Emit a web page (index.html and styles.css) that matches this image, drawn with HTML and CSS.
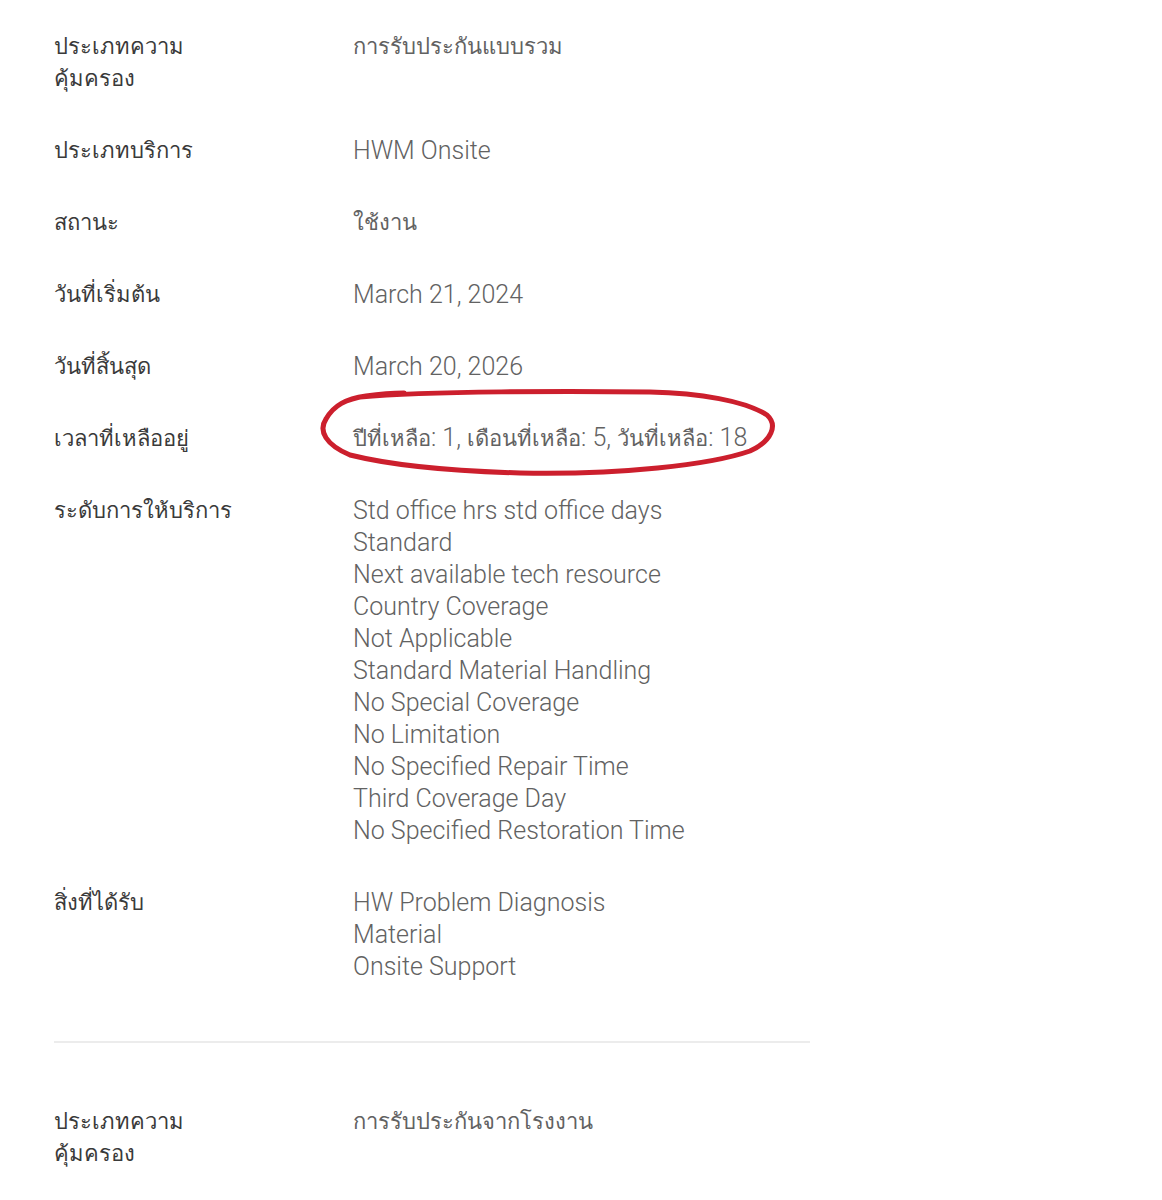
FILE: index.html
```html
<!DOCTYPE html>
<html lang="th">
<head>
    <meta charset="UTF-8">
    <meta name="viewport" content="width=device-width, initial-scale=1.0">
    <title>ข้อมูลการรับประกัน</title>
    <link rel="stylesheet" href="styles.css">
</head>
<body>

<div class="warranty">
    <div class="warranty-block">
        <dl class="details">
            <dt>ประเภทความคุ้มครอง</dt>
            <dd>การรับประกันแบบรวม</dd>

            <dt>ประเภทบริการ</dt>
            <dd class="en">HWM Onsite</dd>

            <dt>สถานะ</dt>
            <dd>ใช้งาน</dd>

            <dt>วันที่เริ่มต้น</dt>
            <dd class="en">March 21, 2024</dd>

            <dt>วันที่สิ้นสุด</dt>
            <dd class="en">March 20, 2026</dd>

            <dt>เวลาที่เหลืออยู่</dt>
            <dd class="remaining">
                ปีที่เหลือ<span class="en">: 1, </span>เดือนที่เหลือ<span class="en">: 5, </span>วันที่เหลือ<span class="en">: 18</span>
                <svg class="circled" viewBox="0 0 460 96" aria-hidden="true">
                    <path d="M40 14 C110 8 250 8 330 9 C380 10 425 18 447 32 C458 42 452 58 430 68 C390 82 300 92 200 90 C130 88 70 82 30 72 C6 62 -2 48 6 36 C14 22 26 16 46 13 C60 11 72 10 84 10"/>
                </svg>
            </dd>

            <dt>ระดับการให้บริการ</dt>
            <dd class="en">
                <ul class="value-list">
                    <li>Std office hrs std office days</li>
                    <li>Standard</li>
                    <li>Next available tech resource</li>
                    <li>Country Coverage</li>
                    <li>Not Applicable</li>
                    <li>Standard Material Handling</li>
                    <li>No Special Coverage</li>
                    <li>No Limitation</li>
                    <li>No Specified Repair Time</li>
                    <li>Third Coverage Day</li>
                    <li>No Specified Restoration Time</li>
                </ul>
            </dd>

            <dt>สิ่งที่ได้รับ</dt>
            <dd class="en">
                <ul class="value-list">
                    <li>HW Problem Diagnosis</li>
                    <li>Material</li>
                    <li>Onsite Support</li>
                </ul>
            </dd>
        </dl>
    </div>

    <div class="warranty-block">
        <dl class="details">
            <dt>ประเภทความคุ้มครอง</dt>
            <dd>การรับประกันจากโรงงาน</dd>
        </dl>
    </div>
</div>

</body>
</html>
```

FILE: styles.css
```css
body {
    font-family: Roboto, "Noto Sans", sans-serif;
    margin: 0;
    padding: 0;
    background-color: white;
}

.warranty {
    width: 756px;
    padding: 31px 0 0 54px;
}

.warranty-block {
    padding-bottom: 58px;
}

.warranty-block + .warranty-block {
    border-top: 2px solid #ececec;
    padding-top: 63px;
}

.details {
    display: grid;
    grid-template-columns: 299px 1fr;
    row-gap: 40px;
    margin: 0;
    font-size: 22px;
    line-height: 32px;
    font-weight: 300;
}

.details dt {
    color: #3a3a3a;
    max-width: 200px;
}

.details dd {
    margin: 0;
    color: #626262;
}

.details .en {
    font-size: 25px;
}

.remaining .en {
    line-height: 1;
}

.remaining {
    position: relative;
}

.circled {
    position: absolute;
    left: -33px;
    top: -40px;
    width: 460px;
    height: 96px;
    overflow: visible;
}

.circled path {
    fill: none;
    stroke: #cc1f2d;
    stroke-width: 5;
    stroke-linecap: round;
}

.value-list {
    list-style: none;
    margin: 0;
    padding: 0;
}
```
